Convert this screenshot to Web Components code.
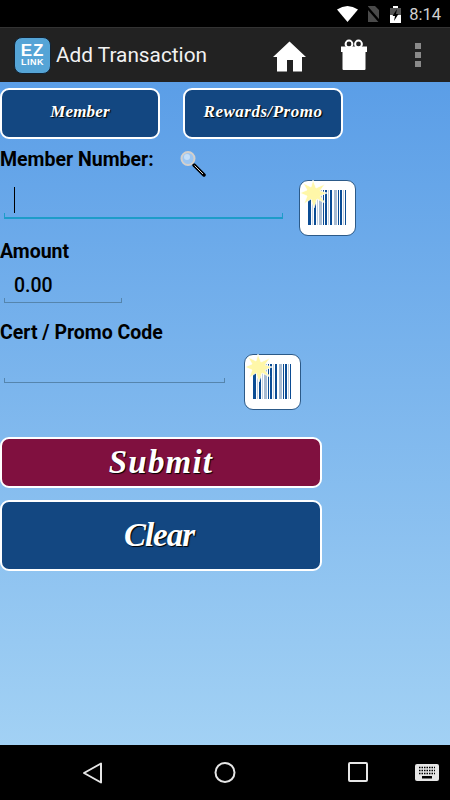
<!DOCTYPE html>
<html>
<head>
<meta charset="utf-8">
<title>Add Transaction</title>
<style>
  html, body { margin: 0; padding: 0; }
  body { width: 450px; height: 800px; overflow: hidden; font-family: Roboto, sans-serif; }
  .tabs { display: flex; gap: 23px; }
</style>
</head>
<body>
<app-screen>
  <status-bar slot="status"></status-bar>
  <action-bar slot="action" title-text="Add Transaction"></action-bar>

  <div slot="tabs" class="tabs">
    <ez-button width="160" height="51" size="17" spacing="0.2" lift="3">Member</ez-button>
    <ez-button width="160" height="51" size="17" spacing="0.5" lift="3">Rewards/Promo</ez-button>
  </div>

  <form-label slot="member-label" search>Member Number:</form-label>
  <scan-field slot="member-field" width="279" height="56" line-top="37" gap="16" focused></scan-field>

  <form-label slot="amount-label">Amount</form-label>
  <amount-field slot="amount-field" value="0.00"></amount-field>

  <form-label slot="cert-label">Cert / Promo Code</form-label>
  <scan-field slot="cert-field" width="221" height="56" line-top="28" gap="19"></scan-field>

  <ez-button slot="submit" width="322" height="51" size="33" spacing="1.2" color="#80103f">Submit</ez-button>
  <ez-button slot="clear" width="322" height="71" size="33" spacing="-1" shift="4">Clear</ez-button>

  <nav-bar slot="nav"></nav-bar>
</app-screen>

<script>
(function() {
  'use strict';

  // Page frame: bars top and bottom, blue form in between
  class AppScreen extends HTMLElement {
    constructor() {
      super();
      this.attachShadow({ mode: 'open' }).innerHTML = `
        <style>
          :host { display: flex; flex-direction: column; width: 450px; height: 800px; }
          main {
            flex: 1;
            display: flex;
            flex-direction: column;
            background: linear-gradient(180deg, #5b9ee7 0%, #a2d1f4 100%);
          }
          .tabs { margin-top: 6px; }
          .member-label { margin-top: 4px; height: 27px; }
          .member-field { margin-top: 10px; }
          .amount-label { margin-top: 4px; }
          .amount-field { margin-top: 5px; }
          .cert-label { margin-top: 18px; }
          .cert-field { margin-top: 9px; }
          .submit { margin-top: 27px; }
          .clear { margin-top: 12px; }
        </style>
        <slot name="status"></slot>
        <slot name="action"></slot>
        <main>
          <div class="tabs"><slot name="tabs"></slot></div>
          <div class="member-label"><slot name="member-label"></slot></div>
          <div class="member-field"><slot name="member-field"></slot></div>
          <div class="amount-label"><slot name="amount-label"></slot></div>
          <div class="amount-field"><slot name="amount-field"></slot></div>
          <div class="cert-label"><slot name="cert-label"></slot></div>
          <div class="cert-field"><slot name="cert-field"></slot></div>
          <div class="submit"><slot name="submit"></slot></div>
          <div class="clear"><slot name="clear"></slot></div>
        </main>
        <slot name="nav"></slot>
      `;
    }
  }

  class StatusBar extends HTMLElement {
    constructor() {
      super();
      this.attachShadow({ mode: 'open' }).innerHTML = `
        <style>
          :host {
            display: flex;
            align-items: center;
            justify-content: flex-end;
            height: 27px;
            background: #000;
            color: #d0d0d0;
            font: 400 16.500px Roboto, sans-serif;
            box-sizing: border-box;
            padding: 1px 9px 0 0;
          }
          svg { display: block; }
          .wifi { margin-right: 8px; }
          .sim { margin-right: 10px; }
          .batt { margin-right: 8px; }
        </style>
        <svg class="wifi" width="21" height="16" viewBox="0 0 21 16"><path d="M0 3.500Q10.500-3.500 21 3.500L10.500 16Z" fill="#fff"/></svg>
        <svg class="sim" width="14" height="16" viewBox="0 0 14 16">
          <path d="M2 0H9L13 4V16H2Z" fill="#4a4a4a"/>
          <path d="M0 0L14 16" stroke="#000" stroke-width="2.400"/>
        </svg>
        <svg class="batt" width="11" height="17" viewBox="0 0 11 17">
          <path d="M3 0H8V2H11V17H0V2H3Z" fill="#fff"/>
          <path d="M0 2H11V9H0Z" fill="#555"/>
          <path d="M7 3L2.500 10H5L4 15L8.500 8H6Z" fill="#000"/>
        </svg>
        <span>8:14</span>
      `;
    }
  }

  class ActionBar extends HTMLElement {
    constructor() {
      super();
      const title = this.getAttribute('title-text') || '';
      this.attachShadow({ mode: 'open' }).innerHTML = `
        <style>
          :host {
            display: flex;
            align-items: center;
            height: 55px;
            box-sizing: border-box;
            background: #222;
            border-top: 1px solid #333;
            color: #f2f2f2;
            padding-left: 14px;
          }
          .logo {
            width: 37px;
            height: 37px;
            box-sizing: border-box;
            border-radius: 8px;
            background: #55a4d6;
            border: 1px solid #123;
            color: #fff;
            display: flex;
            align-items: center;
            justify-content: center;
          }
          /* one text node, two sizes */
          .mark {
            white-space: pre;
            text-align: center;
            font: 700 9px/8px "Liberation Sans", sans-serif;
            letter-spacing: 0.5px;
          }
          .mark::first-line { font-size: 17px; line-height: 14px; letter-spacing: 1px; }
          .title { font: 400 20.800px Roboto, sans-serif; margin-left: 5px; flex: 1; }
          svg { display: block; }
          .home { margin-right: 35px; margin-top: 3px; }
          .gift { margin-right: 48px; }
          .more { margin-right: 29px; }
        </style>
        <div class="logo"><div class="mark">EZ
LINK</div></div>
        <div class="title">${title}</div>
        <svg class="home" width="33" height="31" viewBox="0 0 33 31">
          <path d="M16.500 0.500L33 16H29V30.500H20V19H14V30.500H4V16H0Z" fill="#fff"/>
        </svg>
        <svg class="gift" width="26" height="32" viewBox="0 0 26 32">
          <circle cx="8" cy="5" r="3.400" fill="none" stroke="#fff" stroke-width="2"/>
          <circle cx="17.500" cy="5" r="3.400" fill="none" stroke="#fff" stroke-width="2"/>
          <path d="M0 7.500H26V13H24.500V30Q24.500 31 23.500 31H2.500Q1.500 31 1.500 30V13H0Z" fill="#fff"/>
        </svg>
        <svg class="more" width="6" height="24" viewBox="0 0 6 24" fill="#8a8a8a">
          <rect width="6" height="6"/><rect y="9" width="6" height="6"/><rect y="18" width="6" height="6"/>
        </svg>
      `;
    }
  }

  // Navy or maroon button with the handwritten label
  class EzButton extends HTMLElement {
    constructor() {
      super();
      const w = this.getAttribute('width');
      const h = this.getAttribute('height');
      const size = this.getAttribute('size');
      const spacing = this.getAttribute('spacing') || 0;
      const lift = this.getAttribute('lift') || 0;
      const shift = this.getAttribute('shift') || 0;
      const color = this.getAttribute('color') || '#134781';
      this.attachShadow({ mode: 'open' }).innerHTML = `
        <style>
          :host {
            display: flex;
            align-items: center;
            justify-content: center;
            width: ${w}px;
            height: ${h}px;
            box-sizing: border-box;
            background: ${color};
            border: 2px solid #fff;
            border-radius: 9px;
            color: #fff;
            font: italic 700 ${size}px "Liberation Serif", serif;
            letter-spacing: ${spacing}px;
            text-shadow: 1px 1px 1px #000;
            padding-bottom: ${lift}px;
            padding-right: ${shift}px;
          }
        </style>
        <slot></slot>
      `;
    }
  }

  class FormLabel extends HTMLElement {
    constructor() {
      super();
      const search = this.hasAttribute('search');
      this.attachShadow({ mode: 'open' }).innerHTML = `
        <style>
          :host {
            display: flex;
            align-items: center;
            color: #000;
            font: 700 19.500px/24px Roboto, sans-serif;
          }
          svg { display: block; margin-left: 26px; margin-top: 7px; }
        </style>
        <slot></slot>
        ${search ? `
        <svg width="26" height="27" viewBox="0 0 26 27">
          <path d="M14 15L24 25" stroke="#000" stroke-width="3.500" stroke-linecap="round"/>
          <path d="M14.500 15.500L23 24" stroke="#ddd" stroke-width="1"/>
          <circle cx="8" cy="8.500" r="6.500" fill="#9cc6f2" stroke="#d4d0cc" stroke-width="2"/>
          <circle cx="7" cy="7" r="3" fill="#c4dffa"/>
        </svg>` : ''}
      `;
    }
  }

  // Input with its underline, plus the barcode scan button beside it
  class ScanField extends HTMLElement {
    constructor() {
      super();
      const w = this.getAttribute('width');
      const h = this.getAttribute('height');
      const top = this.getAttribute('line-top');
      const gap = this.getAttribute('gap');
      const focused = this.hasAttribute('focused');
      const line = focused ? '#1d9cc9' : '#5585ad';
      const weight = focused ? 2 : 1;
      this.attachShadow({ mode: 'open' }).innerHTML = `
        <style>
          :host { display: flex; align-items: flex-start; height: ${h}px; padding-left: 4px; }
          .input {
            position: relative;
            width: ${w}px;
            height: ${top}px;
            box-sizing: content-box;
            border-bottom: ${weight}px solid ${line};
          }
          .input::before, .input::after {
            content: "";
            position: absolute;
            bottom: 0;
            width: 1px;
            height: 4px;
            background: ${line};
          }
          .input::before { left: 0; }
          .input::after { right: 0; }
          .caret {
            position: absolute;
            left: 10px;
            top: 7px;
            width: 1px;
            height: 26px;
            background: #000;
          }
          scan-button { margin-left: ${gap}px; }
        </style>
        <div class="input">${focused ? '<div class="caret"></div>' : ''}</div>
        <scan-button></scan-button>
      `;
    }
  }

  class ScanButton extends HTMLElement {
    constructor() {
      super();
      // bar x, width, colour: dark blue, grey-blue and pale
      const d = '#0b4c94', g = '#a9bcd2', l = '#c4d0de';
      const bars = [[9,3,d],[13,1,l],[15,2,d],[18,1,l],[20,3,g],[24,1,d],[26,2,d],[29,1,l],[31,2,d],[35,3,g],[39,1,d],[41,2,d],[44,1,l],[46,1,d]];
      const rects = bars.map(b => `<rect x="${b[0] - 1}" y="9" width="${b[1]}" height="35" fill="${b[2]}"/>`).join('');
      this.attachShadow({ mode: 'open' }).innerHTML = `
        <style>
          :host {
            display: block;
            width: 57px;
            height: 56px;
            box-sizing: border-box;
            background: #fff;
            border: 1px solid #2c5a88;
            border-radius: 9px;
          }
          svg { display: block; overflow: visible; }
        </style>
        <svg width="55" height="54" viewBox="0 0 55 54">
          ${rects}
          <path d="M13 -1L16 7L25 3L20 10L27 12L20 15L25 22L17 18L14 27L11 18L4 23L7 15L0 12L7 9L3 2L11 6Z" fill="#fff7a8" stroke="#fff" stroke-width="0.700"/>
        </svg>
      `;
    }
  }

  class AmountField extends HTMLElement {
    constructor() {
      super();
      const value = this.getAttribute('value') || '';
      this.attachShadow({ mode: 'open' }).innerHTML = `
        <style>
          :host { display: block; padding-left: 4px; }
          .input {
            position: relative;
            width: 118px;
            height: 33px;
            border-bottom: 1px solid #5585ad;
            box-sizing: content-box;
            color: #000;
            font: 500 19.500px/34px Roboto, sans-serif;
            text-indent: 10px;
          }
          .input::before, .input::after {
            content: "";
            position: absolute;
            bottom: 0;
            width: 1px;
            height: 4px;
            background: #5585ad;
          }
          .input::before { left: 0; }
          .input::after { right: 0; }
        </style>
        <div class="input">${value}</div>
      `;
    }
  }

  class NavBar extends HTMLElement {
    constructor() {
      super();
      this.attachShadow({ mode: 'open' }).innerHTML = `
        <style>
          :host {
            display: block;
            position: relative;
            height: 55px;
            background: #000;
          }
          svg { position: absolute; display: block; }
        </style>
        <svg style="left:82px;top:17px" width="21" height="22" viewBox="0 0 21 22">
          <path d="M19 1.500V20.500L2 11Z" fill="none" stroke="#e6e6e6" stroke-width="2" stroke-linejoin="round"/>
        </svg>
        <svg style="left:214px;top:16px" width="22" height="23" viewBox="0 0 22 23">
          <circle cx="11" cy="11.500" r="9.500" fill="none" stroke="#e6e6e6" stroke-width="2"/>
        </svg>
        <svg style="left:348px;top:17px" width="20" height="20" viewBox="0 0 20 20">
          <rect x="1" y="1" width="18" height="18" rx="1" fill="none" stroke="#e6e6e6" stroke-width="2"/>
        </svg>
        <svg style="left:415px;top:19px" width="24" height="17" viewBox="0 0 24 17">
          <rect width="24" height="17" rx="2" fill="#e6e6e6"/>
          <path d="M4 3.500H20M4 6.500H20M4 9.500H20" stroke="#000" stroke-width="1.500" stroke-dasharray="1.500 1"/>
          <rect x="7" y="12" width="10" height="2.500" fill="#000"/>
        </svg>
      `;
    }
  }

  customElements.define('app-screen', AppScreen);
  customElements.define('status-bar', StatusBar);
  customElements.define('action-bar', ActionBar);
  customElements.define('ez-button', EzButton);
  customElements.define('form-label', FormLabel);
  customElements.define('scan-button', ScanButton);
  customElements.define('scan-field', ScanField);
  customElements.define('amount-field', AmountField);
  customElements.define('nav-bar', NavBar);
})();
</script>
</body>
</html>
